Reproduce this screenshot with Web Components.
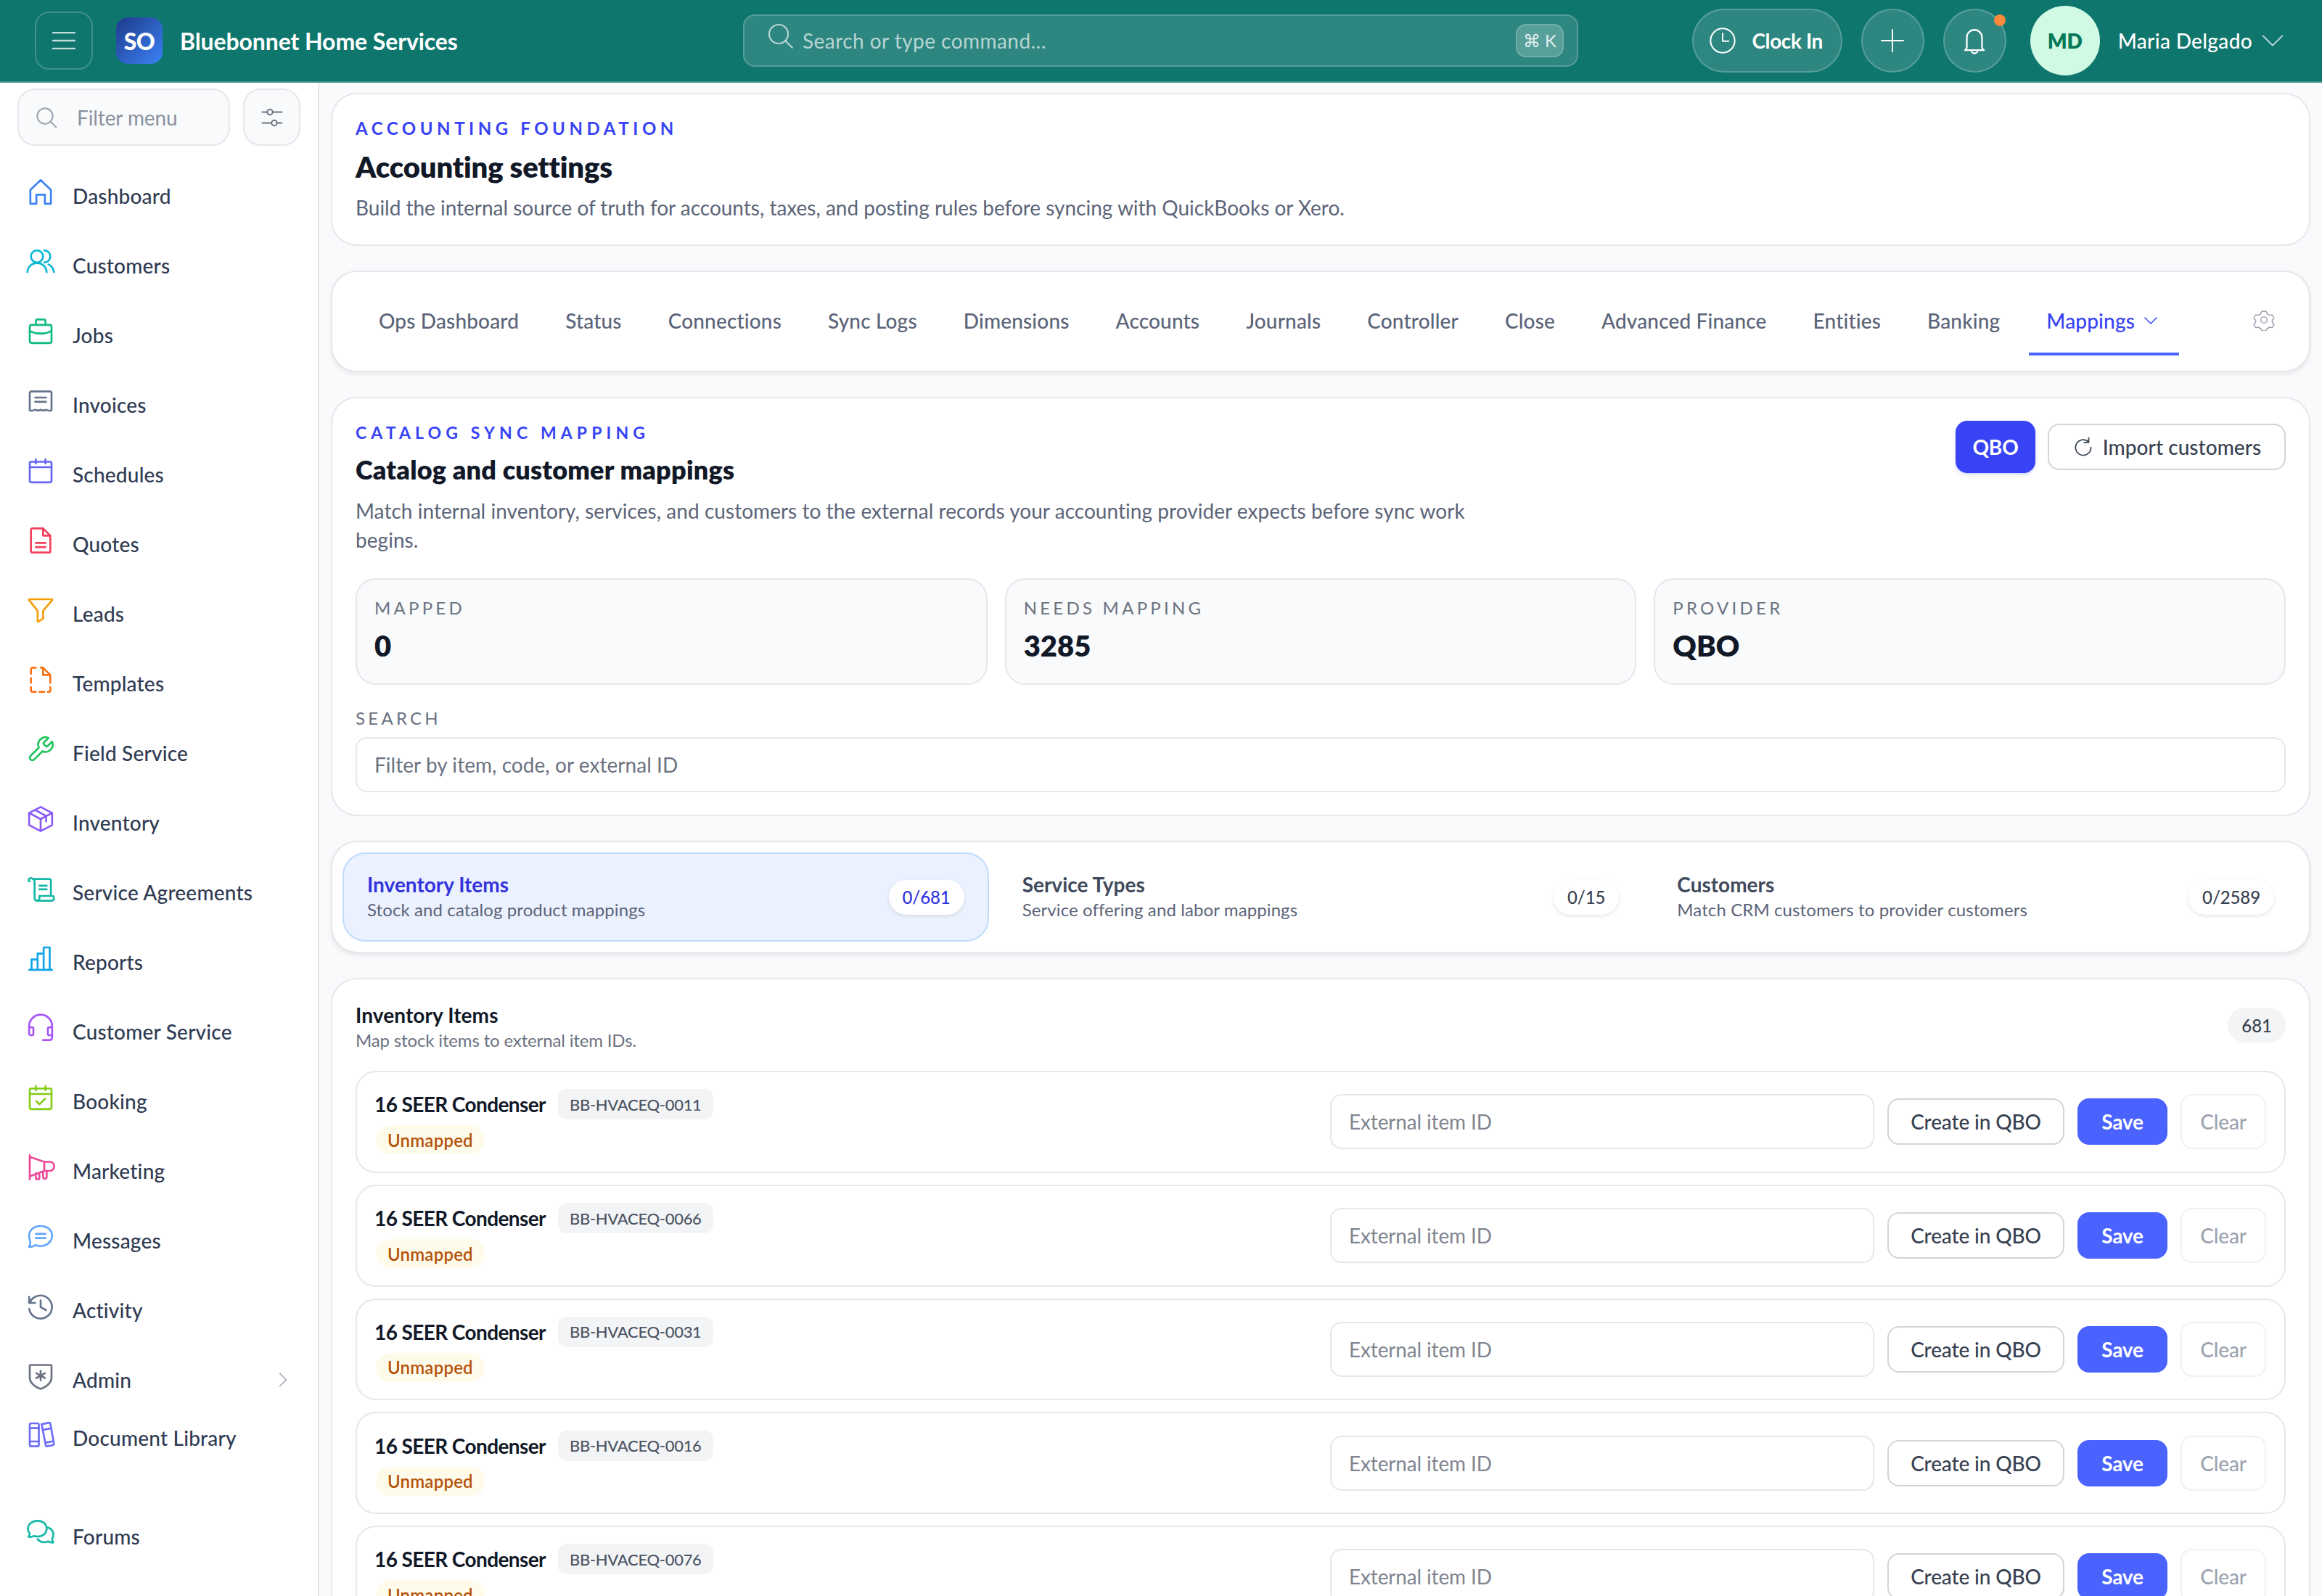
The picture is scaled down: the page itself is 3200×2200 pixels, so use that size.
<!DOCTYPE html>
<html lang="en"><head><meta charset="utf-8"><title>Accounting settings</title>
<style>
html,body{margin:0;padding:0;height:2200px;overflow:hidden;background:#f9fafb}
body{font-family:Lato,"Noto Sans",sans-serif;color:#111827}
</style></head><body>
<so-app></so-app>
<script>
const ICONS={
home:'<path d="M3.500 21.500V10L12 2l8.500 8v11.500h-5V14h-7v7.500z"/>',
users:'<circle cx="9" cy="7.500" r="5"/><path d="M1 20.500c.4-4.500 3.400-7.500 8-7.500s7.600 3 8 7.500M15 2.500a5 5 0 0 1 0 10M18.500 14c2.600 1.300 4.100 3.500 4.500 6.500"/>',
brief:'<rect x="3" y="6.500" width="18" height="15" rx="1.500"/><path d="M8 6.500V3.500a1.500 1.500 0 0 1 1.500-1.500h5A1.500 1.500 0 0 1 16 3.500v3M3 11.500c5.500 3 12.500 3 18 0M10.500 13.500h3"/>',
receipt:'<path d="M3 19.500V5.200A1.200 1.200 0 0 1 4.200 4h15.600A1.200 1.200 0 0 1 21 5.200v14.300c-1.500 1-3 .2-4.500-.4-1.500.8-3 .8-4.500 0-1.500.8-3 .8-4.500 0-1.500.6-3 1.400-4.500.4zM7.500 9h9M7.500 12.500h9"/>',
cal:'<rect x="3" y="4.500" width="18" height="17" rx="1.200"/><path d="M3 9h18M8 2.500V6M16 2.500V6"/>',
calcheck:'<rect x="3" y="4.500" width="18" height="17" rx="1.200"/><path d="M3 9h18M8 2.500V6M16 2.500V6M8.500 15l2.600 2.500 4.600-4.500"/>',
doc:'<path d="M4 3.200A1.200 1.200 0 0 1 5.200 2H14l6 6v13a1 1 0 0 1-1 1H5.200A1.200 1.200 0 0 1 4 20.800zM14 2v6h6M8 14h8M8 17.500h8"/>',
funnel:'<path d="M2.500 3h19v.8l-7.500 8.700v6.500l-4 2.500h-.5v-9L2.500 3.800z"/>',
dashed:'<path d="M4 7V3.500A1.500 1.500 0 0 1 5.500 2H8M4 10.500v4M4 18v2.500A1.500 1.500 0 0 0 5.500 22H8M11 22h4M18 22h1a1 1 0 0 0 1-1v-3M20 14.500V8l-6-6h-2M14 2v6h6"/>',
wrench:'<path d="M14.700 6.300a1 1 0 0 0 0 1.400l1.600 1.600a1 1 0 0 0 1.400 0l3.770-3.770a6 6 0 0 1-7.940 7.940l-6.910 6.910a2.120 2.120 0 0 1-3-3l6.910-6.910a6 6 0 0 1 7.940-7.940z"/>',
box:'<path d="M12 2l9.500 5v10L12 22l-9.500-5V7zM2.500 7L12 12l9.500-5M12 12v10M7.500 4.500l9 5v4.500"/>',
scroll:'<path d="M5.500 4H19a1.500 1.500 0 0 1 1.500 1.500V18M5 3.500a2 2 0 0 0-3 1.500c0 .8.500 1 1 1M5.500 4c1.200.3 1.500 1 1.500 2v14a2 2 0 0 0 2 2h12a2.200 2.200 0 0 0 2-2.200c0-.9-.5-1.800-1.500-1.800H11v2a2 2 0 0 1-2 2M11 9.500h6M11 12.500h6"/>',
bars:'<path d="M2.500 21.500h19M4.500 21.500V13h5v8.500M9.500 21.500V8h5M14.500 21.500V3h5v18.500"/>',
headset:'<path d="M2.500 14v-3.500a9.500 9.500 0 0 1 19 0V14M2.500 11.500h2.500a1 1 0 0 1 1 1V17a1 1 0 0 1-1 1H4a1.500 1.500 0 0 1-1.500-1.500zM21.500 11.500H19a1 1 0 0 0-1 1V17a1 1 0 0 0 1 1h2.500zM21.500 17v3a2 2 0 0 1-2 2H14"/>',
mega:'<path d="M3 2v20M3 3.500L15 7.500h4.500a3.500 3.500 0 0 1 0 7.500H15L3 19.500M15 7.500V15M8 17v3.500a1.500 1.500 0 0 0 3 0V18M14 15.500V20a1.500 1.500 0 0 0 3 0v-5"/>',
chat:'<path d="M12 3c5.500 0 9.500 3.500 9.500 8s-4 8.500-9.500 8.500c-1.500 0-3-.3-4.300-.8-1.200 1-2.700 1.600-4.700 1.800-.5 0-.7-.4-.4-.8.8-1 1-2 .9-3.200C2.900 15 2.500 13 2.500 11 2.500 6.500 6.500 3 12 3zM8 9.500h8M8 13h8"/>',
history:'<path d="M2.500 4v5h5M3 9a9.500 9.500 0 1 1-.5 5M12 7v5.500l4.500 2.500"/>',
shield:'<path d="M3 3.500c0-.5.300-.8.800-.8h16.400c.5 0 .8.300.8.800V13c0 4.500-4 7.500-9 9.500-5-2-9-5-9-9.500zM12 7.500v8M8.500 9.500l7 4M15.500 9.500l-7 4"/>',
books:'<rect x="3" y="3" width="7.500" height="19" rx="1.200"/><path d="M3 7h7.500M3 18h7.500M12.800 3.800l6-1.300a1 1 0 0 1 1.200.8l3 16.500a1 1 0 0 1-.8 1.200l-4.800 1a1 1 0 0 1-1.200-.8zM13.800 8.500l7-1.500M16.500 19l6-1.300"/>',
chats:'<path d="M9.500 2C14 2 17 4.800 17 8.500S14 15 9.500 15c-1 0-2-.2-3-.5-1.200.7-2.700 1-4 .9-.4 0-.6-.4-.3-.7.6-.7.8-1.500.7-2.400C1.800 11.200 1.500 9.800 1.500 8.500 1.500 4.800 5 2 9.500 2z"/><path d="M18 7.500c2.800 1 4.500 3.200 4.500 5.800 0 1.300-.4 2.500-1 3.500-.1.900.1 1.700.8 2.500.3.300.1.700-.3.700-1.300 0-2.800-.3-3.800-1-1.100.5-2 .7-3.200.7-2.300 0-4.300-.9-5.500-2.500"/>',
search:'<circle cx="10.500" cy="10.500" r="8"/><path d="M16.500 16.500L22 22"/>',
sliders:'<circle cx="10" cy="7" r="2.500"/><circle cx="14" cy="17" r="2.500"/><path d="M3 7h4.500M12.500 7H21M3 17h8.500M16.500 17H21"/>',
chevd:'<path d="M4 8l8 8 8-8"/>',
chevr:'<path d="M8 4l8 8-8 8"/>',
menu:'<path d="M3 5.500h18M3 12h18M3 18.500h18"/>',
clock:'<circle cx="12" cy="12" r="10"/><path d="M12 6v6.500h5"/>',
plus:'<path d="M12 2v20M2 12h20"/>',
bell:'<path d="M6 17V9.500a6 6 0 0 1 12 0V17c0 1 .7 2 1.500 2.500h-15C5.300 19 6 18 6 17zM9.500 19.500a2.500 2.500 0 0 0 5 0"/>',
refresh:'<path d="M17.800 6.500A8.500 8.500 0 1 0 20.500 12.500M18 2v5h-5"/>',
gear:'<path d="M9.500 2.500h5l1 2.800 2.800 1.600 2.900-.5 2 4-2 1.600v3l2 1.500-2 4-2.900-.5-2.800 1.600-1 2.400h-5l-1-2.400-2.800-1.600-2.900.5-2-4 2-1.500v-3l-2-1.600 2-4 2.900.5 2.800-1.600z"/><circle cx="12" cy="12" r="3.500"/>'
};
function def(name,css,html){
  customElements.define(name,class extends HTMLElement{
    constructor(){super();this.attachShadow({mode:'open'})}
    connectedCallback(){
      const a=n=>this.getAttribute(n)||'';
      this.shadowRoot.innerHTML='<style>'+css+'</style>'+(typeof html==='function'?html(a,this):html);
    }
  });
}
const svg=(n,size,color,sw=1.7,st='')=>`<svg xmlns="http://www.w3.org/2000/svg" viewBox="0 0 24 24" width="${size}" height="${size}" fill="none" stroke="${color}" stroke-width="${sw}" stroke-linecap="round" stroke-linejoin="round" style="display:block;flex:none;${st}">${ICONS[n]}</svg>`;

def('so-brand',`:host{display:flex;align-items:center;flex:0 0 976px}
.m{width:80px;height:80px;box-sizing:border-box;border:2px solid rgba(255,255,255,.2);border-radius:20px;display:flex;align-items:center;justify-content:center;margin-right:32px}
.l{width:64px;height:64px;border-radius:16px;background:linear-gradient(135deg,#1e3a8a,#3b82f6);color:#fff;font-weight:900;font-size:32px;display:flex;align-items:center;justify-content:center;margin-right:24px;letter-spacing:-.5px}
.t{font-size:32px;font-weight:700;color:#fff;letter-spacing:-.1px}`,
()=>`<div class="m">${svg('menu',40,'rgba(255,255,255,.75)',1.4)}</div><div class="l">SO</div><div class="t">Bluebonnet Home Services</div>`);

def('so-command',`:host{display:flex;align-items:center;flex:0 0 1151px;height:72px;box-sizing:border-box;background:rgba(255,255,255,.125);border:2px solid rgba(255,255,255,.2);border-radius:16px;padding:0 18px 0 30px}
.t{font-size:28px;color:rgba(255,255,255,.66);margin-left:11px;flex:1;letter-spacing:.45px}
.k{width:66px;height:46px;box-sizing:border-box;border:2px solid rgba(255,255,255,.15);background:rgba(255,255,255,.2);border-radius:14px;color:rgba(255,255,255,.85);font-size:24px;display:flex;align-items:center;justify-content:center}
svg{margin-top:-14px}`,
()=>`${svg('search',39,'rgba(255,255,255,.66)',1.3)}<div class="t">Search or type command...</div><div class="k">⌘ K</div>`);

def('so-round',`:host{display:flex;align-items:center;justify-content:center;position:relative;height:88px;min-width:87px;box-sizing:border-box;background:rgba(255,255,255,.125);border:2px solid rgba(255,255,255,.2);border-radius:44px;color:#fff;font-size:28px;font-weight:700;letter-spacing:-.4px;white-space:nowrap}
:host([wide]){width:207px;padding:0 25px 0 21px;gap:20px}
.d{position:absolute;width:16px;height:16px;border-radius:50%;background:#fb8a3c;right:-1px;top:6px}`,
(a)=>svg(a('icon'),a('icon')=='clock'?40:a('icon')=='plus'?36:42,'#fff',a('icon')=='clock'?1.2:1.3)+'<slot></slot>'+(a('dot')?'<div class="d"></div>':''));

def('so-user',`:host{display:flex;align-items:center;color:#fff;font-size:28px;font-weight:500}
.a{width:96px;height:96px;border-radius:50%;background:#d1fae5;color:#047857;font-weight:800;display:flex;align-items:center;justify-content:center;margin-right:25px}
.n{margin-right:8px;letter-spacing:.35px}`,
()=>`<div class="a">MD</div><div class="n">Maria Delgado</div>${svg('chevd',40,'rgba(255,255,255,.8)',1)}`);

def('so-topbar',`:host{display:flex;align-items:center;height:114px;box-sizing:border-box;background:#0f766e;border-bottom:2px solid #3f9289;padding:0 48px 0 48px}
.r{display:flex;align-items:center;margin-left:auto}
so-round{margin-right:26px}
so-round.b{margin-right:33px}`,
()=>`<so-brand></so-brand><so-command></so-command><div class="r"><so-round wide icon="clock">Clock In</so-round><so-round icon="plus"></so-round><so-round class="b" icon="bell" dot="1"></so-round><so-user></so-user></div>`);

def('nav-item',`:host{display:flex;align-items:center;height:var(--h,96px);box-sizing:border-box;padding:0 36px;color:#2f3b52;font-size:28px;font-weight:500;letter-spacing:.2px}
svg{margin-right:24px;margin-bottom:10px}`,
(a)=>svg(a('icon'),40,a('color'),1.6)+'<slot></slot>'+(a('more')?svg('chevr',26,'#9ca3af',1.4,'margin:0 -1px 0 auto'):''));

def('so-filter',`:host{display:flex;gap:18px;padding:8px 24px 21px 24px}
.i{flex:1;height:79px;box-sizing:border-box;background:#f9fafb;border:2px solid #e5e7eb;border-radius:24px;display:flex;align-items:center;padding:0 22px;color:#8a919e;font-size:28px;gap:26px;letter-spacing:-.1px}
.b{width:79px;height:79px;box-sizing:border-box;background:#f9fafb;border:2px solid #e5e7eb;border-radius:24px;display:flex;align-items:center;justify-content:center}`,
()=>`<div class="i">${svg('search',32,'#9ca3af',1.5)}<span>Filter menu</span></div><div class="b">${svg('sliders',36,'#6b7280',1.3)}</div>`);

const NAV=[['home','#3b82f6','Dashboard'],['users','#06b6d4','Customers'],['brief','#10b981','Jobs'],['receipt','#64748b','Invoices'],['cal','#6366f1','Schedules'],['doc','#f43f5e','Quotes'],['funnel','#f59e0b','Leads'],['dashed','#f97316','Templates'],['wrench','#22c55e','Field Service'],['box','#8b5cf6','Inventory'],['scroll','#14b8a6','Service Agreements'],['bars','#0ea5e9','Reports'],['headset','#a855f7','Customer Service'],['calcheck','#84cc16','Booking'],['mega','#ec4899','Marketing'],['chat','#60a5fa','Messages'],['history','#64748b','Activity'],['shield','#6b7280','Admin'],['books','#6d6ef8','Document Library'],['chats','#14b8a6','Forums']];
def('so-sidebar',`:host{display:block;flex:0 0 440px;box-sizing:border-box;background:#fff;border-right:2px solid #e5e7eb;height:2086px;overflow:hidden}
.d{--h:64px}.f{margin-top:56px}`,
()=>`<so-filter></so-filter>`+NAV.map(n=>`<nav-item icon="${n[0]}" color="${n[1]}" class="${n[2]=='Document Library'?'d':n[2]=='Forums'?'f':''}" ${n[2]=='Admin'?'more="1"':''}>${n[2]}</nav-item>`).join(''));

def('so-card',`:host{display:block;flex:none;box-sizing:border-box;background:#fff;border:2px solid #e5e7eb;border-radius:36px;padding:31px 32px}
:host([flat]){padding:0}
:host([raised]){box-shadow:0 3px 6px rgba(17,24,39,.08)}`,'<slot></slot>');

def('so-eyebrow',`:host{display:block;font-size:24px;line-height:32px;font-weight:700;color:#3843f5;letter-spacing:5.55px}
:host([tight]){font-size:23px;letter-spacing:6.1px}`,'<slot></slot>');

def('acct-header',`h1{margin:11px 0 10px;font-size:40px;line-height:52px;font-weight:800;color:#111827;letter-spacing:-.15px}
p{margin:0;font-size:28px;line-height:40px;color:#5b6478;letter-spacing:-.02px}`,
()=>`<so-eyebrow>ACCOUNTING FOUNDATION</so-eyebrow><h1>Accounting settings</h1><p>Build the internal source of truth for accounts, taxes, and posting rules before syncing with QuickBooks or Xero.</p>`);

def('so-tab',`:host{display:flex;align-items:center;height:94px;box-sizing:border-box;padding:0 24px 3px;color:#5b6478;font-size:28px;font-weight:500;gap:10px;letter-spacing:.16px;white-space:nowrap}
:host([active]){color:#3843f5;box-shadow:inset 0 -4px 0 #4a63ff;padding-right:27px}`,
(a)=>'<slot></slot>'+(a('chev')?svg('chevd',24,'#3843f5',1.5):''));

def('so-tabs',`:host{display:flex;align-items:center;height:136px;padding:0 47px 0 40px;gap:16px}
svg{margin-left:auto;margin-bottom:4px}`,
()=>['Ops Dashboard','Status','Connections','Sync Logs','Dimensions','Accounts','Journals','Controller','Close','Advanced Finance','Entities','Banking'].map(t=>`<so-tab>${t}</so-tab>`).join('')+`<so-tab active chev="1">Mappings</so-tab>${svg('gear',30,'#9ca3af',1.2)}`);

def('stat-card',`:host{display:block;height:147px;box-sizing:border-box;background:#f9fafb;border:2px solid #e5e7eb;border-radius:28px;padding:23px 24px}
.l{font-size:24px;line-height:32px;color:#6b7280;letter-spacing:4.25px}
.v{font-size:40px;line-height:52px;font-weight:800;color:#111827;margin-top:10px}`,
(a)=>`<div class="l">${a('label')}</div><div class="v">${a('value')}</div>`);

def('so-btn',`:host{display:inline-flex;align-items:center;justify-content:center;box-sizing:border-box;height:64px;padding:0 30px;border:2px solid #d1d5db;border-radius:16px;background:#fff;color:#374151;font-size:28px;font-weight:500;gap:14px;letter-spacing:-.15px;white-space:nowrap}
:host([kind=qbo]){height:72px;width:110px;background:#3843f5;border-color:#3843f5;color:#fff;font-weight:700;padding:0;box-shadow:0 2px 4px rgba(56,67,245,.25)}
:host([kind=save]){background:#4a63ff;border-color:#4a63ff;color:#fff;font-weight:700;width:124px;padding:0}
:host([kind=clear]){height:76px;border-color:#f0f1f3;color:#9ca3af;width:118px;padding:0}
:host([kind=create]){width:244px;padding:0}
:host([kind=import]){width:328px;padding:0;letter-spacing:.05px;gap:12px}`,
(a)=>(a('icon')?svg(a('icon'),30,'#374151',1.4):'')+'<slot></slot>');

def('mapping-header',`h2{margin:11px 0 0;font-size:36px;line-height:48px;font-weight:800;color:#111827;letter-spacing:.2px}
p{margin:0;font-size:28px;line-height:40px;color:#5b6478;max-width:1540px;letter-spacing:.04px}
.g{display:grid;grid-template-columns:repeat(3,1fr);gap:24px;margin-top:33px}
.s{font-size:24px;line-height:32px;color:#6b7280;letter-spacing:4.25px;margin-top:30px}
.i{height:76px;box-sizing:border-box;margin-top:10px;border:2px solid #e5e7eb;border-radius:16px;display:flex;align-items:center;padding:0 24px;color:#6b7280;font-size:28px;letter-spacing:.05px}
.hd{position:relative;height:104px}
.a{position:absolute;right:0;top:0;display:flex;align-items:center;gap:17px}`,
()=>`<div class="hd"><so-eyebrow tight>CATALOG SYNC MAPPING</so-eyebrow><h2>Catalog and customer mappings</h2><div class="a"><so-btn kind="qbo">QBO</so-btn><so-btn kind="import" icon="refresh">Import customers</so-btn></div></div>
<p>Match internal inventory, services, and customers to the external records your accounting provider expects before sync work begins.</p>
<div class="g"><stat-card label="MAPPED" value="0"></stat-card><stat-card label="NEEDS MAPPING" value="3285"></stat-card><stat-card label="PROVIDER" value="QBO"></stat-card></div>
<div class="s">SEARCH</div><div class="i">Filter by item, code, or external ID</div>`);

def('scope-item',`:host{display:flex;align-items:center;justify-content:space-between;height:123px;box-sizing:border-box;border:2px solid transparent;border-radius:32px;padding:0 32px}
:host([active]){background:#ebf1fe;border-color:#bfdbfe}
.tx{margin-top:-2px}
.t{font-size:28px;line-height:36px;font-weight:700;color:#3f4a5c;letter-spacing:0}
.s{font-size:24px;line-height:32px;margin-top:1px;color:#5b6478;letter-spacing:.1px}
.p{height:48px;box-sizing:border-box;background:#fff;border-radius:24px;padding:0 19px;display:flex;align-items:center;font-size:24px;font-weight:500;color:#374151;box-shadow:0 2px 5px rgba(17,24,39,.1);letter-spacing:-.1px}
:host([active]) .t,:host([active]) .p{color:#3333dd}`,
(a)=>`<div class="tx"><div class="t">${a('title')}</div><div class="s">${a('sub')}</div></div><div class="p">${a('count')}</div>`);

def('scope-bar',`:host{display:grid;grid-template-columns:repeat(3,1fr);gap:12px;padding:14px}`,
()=>`<scope-item active title="Inventory Items" sub="Stock and catalog product mappings" count="0/681"></scope-item><scope-item title="Service Types" sub="Service offering and labor mappings" count="0/15"></scope-item><scope-item title="Customers" sub="Match CRM customers to provider customers" count="0/2589"></scope-item>`);

def('map-row',`:host{display:flex;align-items:center;justify-content:space-between;height:140.75px;box-sizing:border-box;border:2px solid #e5e7eb;border-radius:28px;padding:0 25px 0 24px;margin-bottom:16px;flex:none}
.n{display:flex;align-items:center;gap:17px}
.nm{font-size:28px;font-weight:700;color:#111827;letter-spacing:-.6px}
.sku{height:42px;box-sizing:border-box;padding:0 16px;background:#f3f4f6;border-radius:12px;display:flex;align-items:center;font-size:22px;font-weight:500;color:#4b5563;letter-spacing:-.3px}
.u{display:inline-flex;align-items:center;height:40px;margin:8px 0 0 2px;padding:0 16px;border-radius:20px;background:#fffbeb;color:#b45309;font-size:24px;font-weight:600;letter-spacing:.2px}
.r{display:flex;align-items:center;gap:18px}
.in{width:750px;height:76px;box-sizing:border-box;border:2px solid #e5e7eb;border-radius:16px;display:flex;align-items:center;padding:0 24px;font-size:28px;color:#80858f;letter-spacing:-.15px}`,
(a)=>`<div><div class="n"><span class="nm">16 SEER Condenser</span><span class="sku">${a('sku')}</span></div><span class="u">Unmapped</span></div><div class="r"><div class="in">External item ID</div><so-btn kind="create">Create in QBO</so-btn><so-btn kind="save">Save</so-btn><so-btn kind="clear">Clear</so-btn></div>`);

def('map-list',`.h{display:flex;justify-content:space-between;align-items:flex-start;margin-bottom:26px}
.t{font-size:28px;line-height:36px;font-weight:700;color:#111827;letter-spacing:.1px}
.s{font-size:24px;line-height:32px;color:#6b7280;margin-top:1px;letter-spacing:-.15px}
.c{height:48px;margin-top:8px;box-sizing:border-box;padding:0 19px;border-radius:24px;background:#f3f4f6;display:flex;align-items:center;font-size:24px;font-weight:500;color:#374151}`,
()=>`<div class="h"><div><div class="t">Inventory Items</div><div class="s">Map stock items to external item IDs.</div></div><div class="c">681</div></div>`+['0011','0066','0031','0016','0076'].map(c=>`<map-row sku="BB-HVACEQ-${c}"></map-row>`).join(''));

def('so-app',`:host{display:block;width:3200px;height:2200px;overflow:hidden}
.b{display:flex;height:2086px}
main{flex:1;display:flex;flex-direction:column;gap:34px;padding:14px 16px 0;overflow:hidden}
.tab{height:140px}.sel{height:155px}`,
()=>`<so-topbar></so-topbar><div class="b"><so-sidebar></so-sidebar><main><so-card><acct-header></acct-header></so-card><so-card flat raised class="tab"><so-tabs></so-tabs></so-card><so-card><mapping-header></mapping-header></so-card><so-card flat raised class="sel"><scope-bar></scope-bar></so-card><so-card><map-list></map-list></so-card></main></div>`);
</script>
</body></html>
